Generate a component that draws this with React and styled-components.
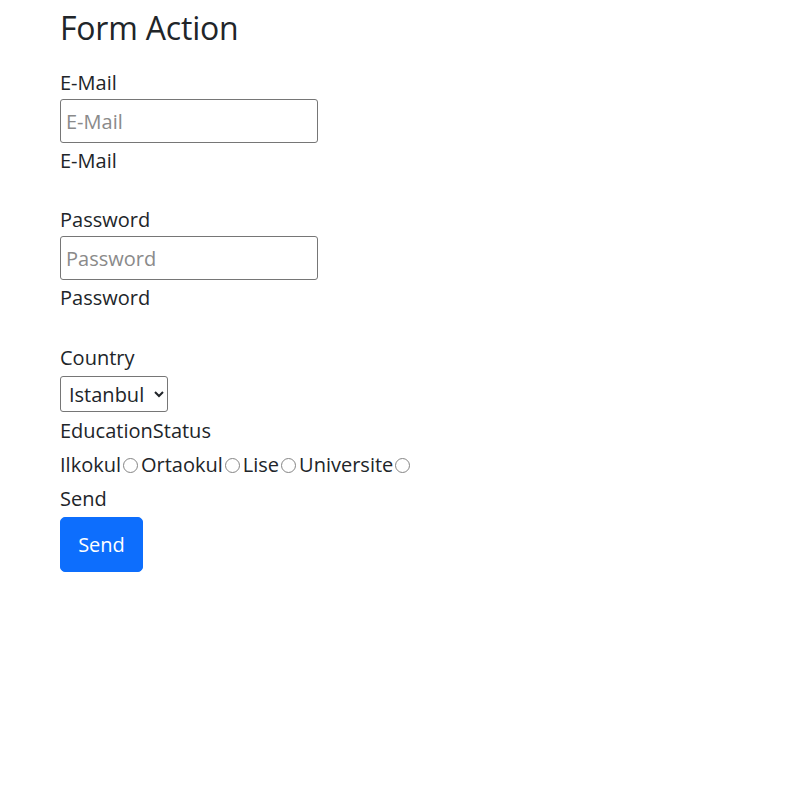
import React from "react";
import styled, { createGlobalStyle } from "styled-components";

const Global = createGlobalStyle`
  html, body { margin: 0; padding: 0; background: #fff; }
  body {
    font-family: "Open Sans", "Noto Sans", sans-serif;
    font-size: 20px;
    line-height: 1.5;
    color: #212529;
  }
  * { box-sizing: border-box; }
`;

const Page = styled.div`
  padding: 7px 0 0 60px;
`;

const Title = styled.h3`
  margin: 0 0 19px;
  font-size: 32px;
  font-weight: 400;
  line-height: 42px;
  letter-spacing: -0.2px;
`;

const Form = styled.form`
  display: flex;
  flex-direction: column;
  align-items: flex-start;
`;

const Group = styled.div`
  display: flex;
  flex-direction: column;
  align-items: flex-start;
  margin-bottom: ${(p) => p.$gap || 0}px;
`;

const Label = styled.label`
  display: block;
  line-height: 30px;
  margin-top: ${(p) => p.$top || 0}px;
`;

const TextInput = styled.input`
  width: 258px;
  height: 44px;
  margin-top: 1px;
  padding: 0 5px;
  border: 1px solid #767676;
  border-radius: 3px;
  font-family: inherit;
  font-size: 20px;
  color: #212529;
  background: #fff;
  &::placeholder { color: #8a8a8a; }
`;

const Help = styled.div`
  line-height: 30px;
  margin-top: 3px;
`;

const Select = styled.select`
  width: 108px;
  height: 36px;
  margin-top: 3px;
  padding: 0 2px 0 4px;
  border: 1px solid #767676;
  border-radius: 3px;
  font-family: inherit;
  font-size: 20px;
  color: #212529;
  background: #fff;
`;

const RadioRow = styled.div`
  display: flex;
  align-items: center;
  line-height: 30px;
  margin-top: 4px;
`;

const Radio = styled.input`
  appearance: none;
  width: 15px;
  height: 15px;
  margin: 1px 3px 0 2px;
  border: 1px solid #858585;
  border-radius: 50%;
  background: #fff;
`;

const Button = styled.button`
  width: 83px;
  height: 55px;
  margin-top: 3px;
  border: 1px solid #0d6efd;
  border-radius: 5px;
  background: #0d6efd;
  color: #fff;
  font-family: inherit;
  font-size: 20px;
`;

const options = ["Ilkokul", "Ortaokul", "Lise", "Universite"];

export default function App() {
  return (
    <Page>
      <Global />
      <Title>Form Action</Title>
      <Form onSubmit={(e) => e.preventDefault()}>
        <Group $gap={29}>
          <Label>E-Mail</Label>
          <TextInput type="email" placeholder="E-Mail" />
          <Help>E-Mail</Help>
        </Group>
        <Group $gap={30}>
          <Label>Password</Label>
          <TextInput type="password" placeholder="Password" />
          <Help>Password</Help>
        </Group>
        <Group>
          <Label>Country</Label>
          <Select defaultValue="Istanbul">
            <option>Istanbul</option>
          </Select>
        </Group>
        <Label $top={4}>EducationStatus</Label>
        <RadioRow>
          {options.map((o) => (
            <React.Fragment key={o}>
              <span>{o}</span>
              <Radio type="radio" name="edu" value={o} />
            </React.Fragment>
          ))}
        </RadioRow>
        <Label $top={4}>Send</Label>
        <Button type="submit">Send</Button>
      </Form>
    </Page>
  );
}
